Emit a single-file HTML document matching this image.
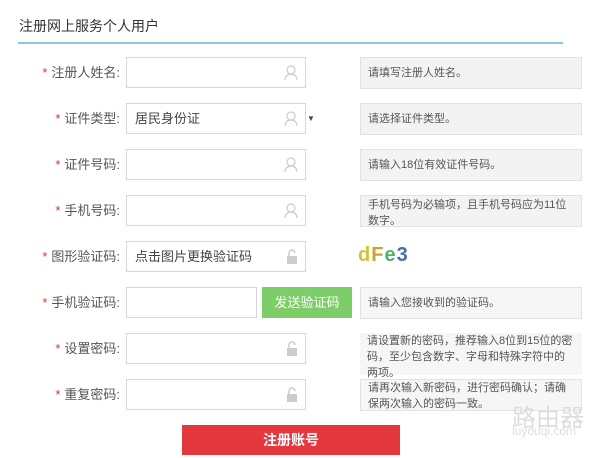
<!DOCTYPE html>
<html><head><meta charset="utf-8"><style>
body{margin:0;width:600px;height:458px;overflow:hidden;background:#fff;font-family:"Liberation Sans","Noto Sans CJK SC",sans-serif;position:relative;color:#444}
.t{position:absolute;left:19px;top:16px;font-size:14px;color:#333}
.line{position:absolute;left:18px;top:42px;width:545px;height:2px;background:#8cc8e6}
.lb{position:absolute;left:0;width:120px;text-align:right;font-size:13px;color:#555;line-height:32px}
.lb b{color:#e03030;font-weight:normal;margin-right:4px}
.in{position:absolute;left:126px;width:180px;height:31px;border:1px solid #d6d6d6;box-sizing:border-box;font-size:13px;line-height:29px;padding-left:8px;color:#444}
.hint{position:absolute;left:360px;width:222px;height:32px;border:1px solid #e2e2e2;background:#f3f3f3;box-sizing:border-box;font-size:11px;color:#555;padding:0 7px;line-height:30px}
.h2{line-height:16px;padding-top:1px}
.ic{position:absolute;right:7px;top:7px}
.btn{position:absolute;left:262px;top:287px;width:90px;height:31px;background:#7dcd68;color:#fff;font-size:13px;text-align:center;line-height:31px}
.reg{position:absolute;left:182px;top:425px;width:218px;height:30px;background:#e4383e;color:#fff;font-size:14px;font-weight:bold;text-align:center;line-height:30px}
.cap{position:absolute;left:358px;top:244px;font-size:20px;font-weight:bold;letter-spacing:1px}
</style></head><body>
<div class="t">注册网上服务个人用户</div><div class="line"></div>

<div class="lb" style="top:57px"><b>*</b>注册人姓名:</div>
<div class="in" style="top:57px"><svg class="ic" width="14" height="16" viewBox="0 0 14 16"><circle cx="7" cy="5" r="4" fill="none" stroke="#ccc" stroke-width="1.2"/><path d="M1 15c0-4 3-6 6-6s6 2 6 6" fill="none" stroke="#ccc" stroke-width="1.2"/></svg></div>
<div class="hint" style="top:57px">请填写注册人姓名。</div>

<div class="lb" style="top:103px"><b>*</b>证件类型:</div>
<div class="in" style="top:103px">居民身份证<span style="position:absolute;left:180px;font-size:8px">▼</span><svg class="ic" width="14" height="16" viewBox="0 0 14 16"><circle cx="7" cy="5" r="4" fill="none" stroke="#ccc" stroke-width="1.2"/><path d="M1 15c0-4 3-6 6-6s6 2 6 6" fill="none" stroke="#ccc" stroke-width="1.2"/></svg></div>
<div class="hint" style="top:103px">请选择证件类型。</div>

<div class="lb" style="top:149px"><b>*</b>证件号码:</div>
<div class="in" style="top:149px"><svg class="ic" width="14" height="16" viewBox="0 0 14 16"><circle cx="7" cy="5" r="4" fill="none" stroke="#ccc" stroke-width="1.2"/><path d="M1 15c0-4 3-6 6-6s6 2 6 6" fill="none" stroke="#ccc" stroke-width="1.2"/></svg></div>
<div class="hint" style="top:149px">请输入18位有效证件号码。</div>

<div class="lb" style="top:195px"><b>*</b>手机号码:</div>
<div class="in" style="top:195px"><svg class="ic" width="14" height="16" viewBox="0 0 14 16"><circle cx="7" cy="5" r="4" fill="none" stroke="#ccc" stroke-width="1.2"/><path d="M1 15c0-4 3-6 6-6s6 2 6 6" fill="none" stroke="#ccc" stroke-width="1.2"/></svg></div>
<div class="hint h2" style="top:195px">手机号码为必输项，且手机号码应为11位数字。</div>

<div class="lb" style="top:241px"><b>*</b>图形验证码:</div>
<div class="in" style="top:241px">点击图片更换验证码<svg class="ic" width="12" height="16" viewBox="0 0 12 16"><path d="M3 7V4a3 3 0 0 1 6 0" fill="none" stroke="#ccc" stroke-width="1.5"/><rect x="1" y="7" width="10" height="8" fill="#ccc"/></svg></div>
<div class="cap"><span style="color:#c8c830">d</span><span style="color:#d0a030">F</span><span style="color:#50b070">e</span><span style="color:#4070b0">3</span></div>

<div class="lb" style="top:287px"><b>*</b>手机验证码:</div>
<div class="in" style="top:287px;width:131px"></div>
<div class="btn">发送验证码</div>
<div class="hint" style="top:287px;background:#f6f6f6">请输入您接收到的验证码。</div>

<div class="lb" style="top:333px"><b>*</b>设置密码:</div>
<div class="in" style="top:333px"><svg class="ic" width="12" height="16" viewBox="0 0 12 16"><path d="M3 7V4a3 3 0 0 1 6 0" fill="none" stroke="#ccc" stroke-width="1.5"/><rect x="1" y="7" width="10" height="8" fill="#ccc"/></svg></div>
<div class="hint h2" style="top:333px;height:42px;background:#f6f6f6;border:none;padding-top:0">请设置新的密码，推荐输入8位到15位的密码，至少包含数字、字母和特殊字符中的两项。</div>

<div class="lb" style="top:379px"><b>*</b>重复密码:</div>
<div class="in" style="top:379px"><svg class="ic" width="12" height="16" viewBox="0 0 12 16"><path d="M3 7V4a3 3 0 0 1 6 0" fill="none" stroke="#ccc" stroke-width="1.5"/><rect x="1" y="7" width="10" height="8" fill="#ccc"/></svg></div>
<div class="hint h2" style="top:379px;background:#f6f6f6;padding-top:0">请再次输入新密码，进行密码确认；请确保两次输入的密码一致。</div>

<div style="position:absolute;left:512px;top:398px;font-size:24px;color:#ddd">路由器</div>
<div style="position:absolute;left:512px;top:424px;font-size:12px;color:#ddd">luyouqi.com</div>
<div class="reg">注册账号</div>
</body></html>
